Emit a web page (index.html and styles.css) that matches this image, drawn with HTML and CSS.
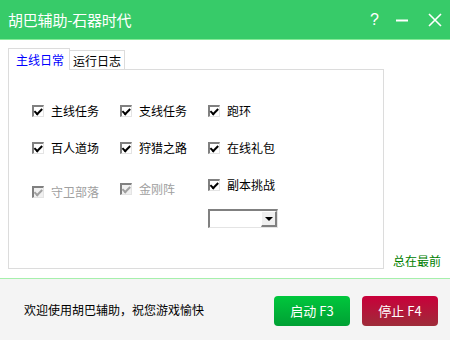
FILE: index.html
```html
<!DOCTYPE html>
<html lang="zh-CN">
  <head>
    <meta charset="UTF-8">
    <title>胡巴辅助-石器时代</title>
    <link rel="stylesheet" href="styles.css">
  </head>
  <body>
    <div class="window">
      <header class="titlebar">
        <span class="title">胡巴辅助-石器时代</span>
        <div class="controls">
          <span class="help">?</span>
          <svg class="min" width="14" height="14" viewBox="0 0 14 14"><path d="M1 7.5 H13" stroke="#fff" stroke-width="2"/></svg>
          <svg class="close" width="14" height="14" viewBox="0 0 14 14"><path d="M1 1 L13 13 M13 1 L1 13" stroke="#fff" stroke-width="1.6"/></svg>
        </div>
      </header>

      <main class="main">
        <div class="tabs-wrap">
          <div class="tabs">
            <div class="tab active">主线日常</div>
            <div class="tab">运行日志</div>
          </div>
          <div class="panel">
            <div class="options">
              <label class="check"><span class="box on"></span>主线任务</label>
              <label class="check"><span class="box on"></span>支线任务</label>
              <label class="check"><span class="box on"></span>跑环</label>

              <label class="check"><span class="box on"></span>百人道场</label>
              <label class="check"><span class="box on"></span>狩猎之路</label>
              <label class="check"><span class="box on"></span>在线礼包</label>

              <label class="check disabled low"><span class="box on"></span>守卫部落</label>
              <label class="check disabled mid"><span class="box on"></span>金刚阵</label>
              <label class="check"><span class="box on"></span>副本挑战</label>

              <div class="select">
                <span class="select-btn"></span>
              </div>
            </div>
          </div>
        </div>
        <div class="side">
          <span class="topmost">总在最前</span>
        </div>
      </main>

      <footer class="footer">
        <span class="welcome">欢迎使用胡巴辅助，祝您游戏愉快</span>
        <div class="actions">
          <button class="btn start">启动 F3</button>
          <button class="btn stop">停止 F4</button>
        </div>
      </footer>
    </div>
  </body>
</html>
```

FILE: styles.css
```css
:root {
  --green: #37cb69;
  --line-green: #a6f0ac;
  --border: #dcdcdc;
  --text: #000000;
  --muted: #a0a0a0;
}

body {
  margin: 0;
  font-family: "Noto Sans CJK SC", "Noto Sans", sans-serif;
  font-size: 12px;
  color: var(--text);
}

.window {
  width: 450px;
  height: 340px;
  display: flex;
  flex-direction: column;
  background: #ffffff;
  overflow: hidden;
}

/* title bar */
.titlebar {
  height: 39px;
  flex: none;
  background: var(--green);
  border-bottom: 1px solid #86ea98;
  display: flex;
  align-items: center;
  justify-content: space-between;
  padding: 0 8px 0 8px;
  color: #ffffff;
}

.title {
  font-size: 15px;
  letter-spacing: -0.2px;
}

.controls {
  display: flex;
  align-items: center;
  gap: 0;
}

.help {
  font-family: "Liberation Sans", sans-serif;
  font-size: 16px;
  width: 10px;
  margin-right: 15px;
}

.min {
  margin-right: 19px;
}

/* main area */
.main {
  height: 231px;
  flex: none;
  display: flex;
  padding: 7px 0 0 8px;
  border-bottom: 1px solid var(--line-green);
}

.tabs-wrap {
  width: 376px;
  display: flex;
  flex-direction: column;
}

.tabs {
  display: flex;
  align-items: flex-end;
  height: 22px;
}

.tab {
  height: 19px;
  line-height: 19px;
  padding: 0 3px;
  border: 1px solid var(--border);
  border-bottom: none;
  background: #ffffff;
}

.tab.active {
  height: 22px;
  line-height: 22px;
  width: 62px;
  box-sizing: border-box;
  padding: 0 0 0 7px;
  color: #0000ff;
  position: relative;
  top: 1px;
  z-index: 1;
}

.tab + .tab {
  border-left: none;
  width: 55px;
  box-sizing: border-box;
}

.panel {
  height: 200px;
  box-sizing: border-box;
  border: 1px solid var(--border);
}

.options {
  display: grid;
  grid-template-columns: 88px 88px 88px;
  grid-auto-rows: 16px;
  row-gap: 21px;
  padding: 33px 0 0 23px;
}

.check {
  display: flex;
  align-items: center;
  gap: 7px;
  height: 16px;
  line-height: 16px;
}

.check.low {
  margin-top: 7px;
}

.check.mid {
  margin-top: 4px;
}

.check.disabled {
  color: var(--muted);
}

.box {
  width: 12px;
  height: 12px;
  box-sizing: border-box;
  border-style: solid;
  border-width: 2px 1px 1px 2px;
  border-color: #808080 #e4e4e4 #e4e4e4 #808080;
  background: #ffffff;
  display: inline-flex;
  align-items: center;
  justify-content: center;
}

.box.on::after {
  content: '';
  width: 6px;
  height: 3px;
  border-left: 2px solid #000000;
  border-bottom: 2px solid #000000;
  transform: rotate(-45deg) translate(0, -1px);
}

.check.disabled .box {
  background: #f0f0f0;
}

.check.disabled .box.on::after {
  border-color: var(--muted);
}

/* combo box */
.select {
  grid-column: 3;
  width: 70px;
  height: 19px;
  margin-top: -5px;
  box-sizing: border-box;
  border-style: solid;
  border-width: 2px 1px 1px 2px;
  border-color: #808080 #e4e4e4 #e4e4e4 #808080;
  display: flex;
  justify-content: flex-end;
}

.select-btn {
  width: 16px;
  box-sizing: border-box;
  background: #f0f0f0;
  border-style: solid;
  border-width: 1px 2px 2px 1px;
  border-color: #ffffff #808080 #808080 #ffffff;
  display: flex;
  align-items: center;
  justify-content: center;
}

.select-btn::after {
  content: '';
  border-left: 4px solid transparent;
  border-right: 4px solid transparent;
  border-top: 4px solid #000000;
}

.side {
  flex: 1;
  display: flex;
  align-items: flex-end;
  padding: 0 0 10px 9px;
}

.topmost {
  color: #008000;
  line-height: 14px;
}

/* footer */
.footer {
  flex: 1;
  background: #f4f4f4;
  display: flex;
  align-items: center;
  justify-content: space-between;
  padding: 0 12px 0 24px;
}

.actions {
  display: flex;
  gap: 12px;
  margin-top: 2px;
}

.btn {
  width: 76px;
  height: 30px;
  border: none;
  border-radius: 4px;
  color: #ffffff;
  font-family: "Noto Sans CJK SC", "Noto Sans", sans-serif;
  font-size: 13px;
  padding: 0;
}

.btn.start {
  background: linear-gradient(#00c73c, #00a034);
}

.btn.stop {
  background: linear-gradient(#c9003a, #9e2d3a);
}
```
